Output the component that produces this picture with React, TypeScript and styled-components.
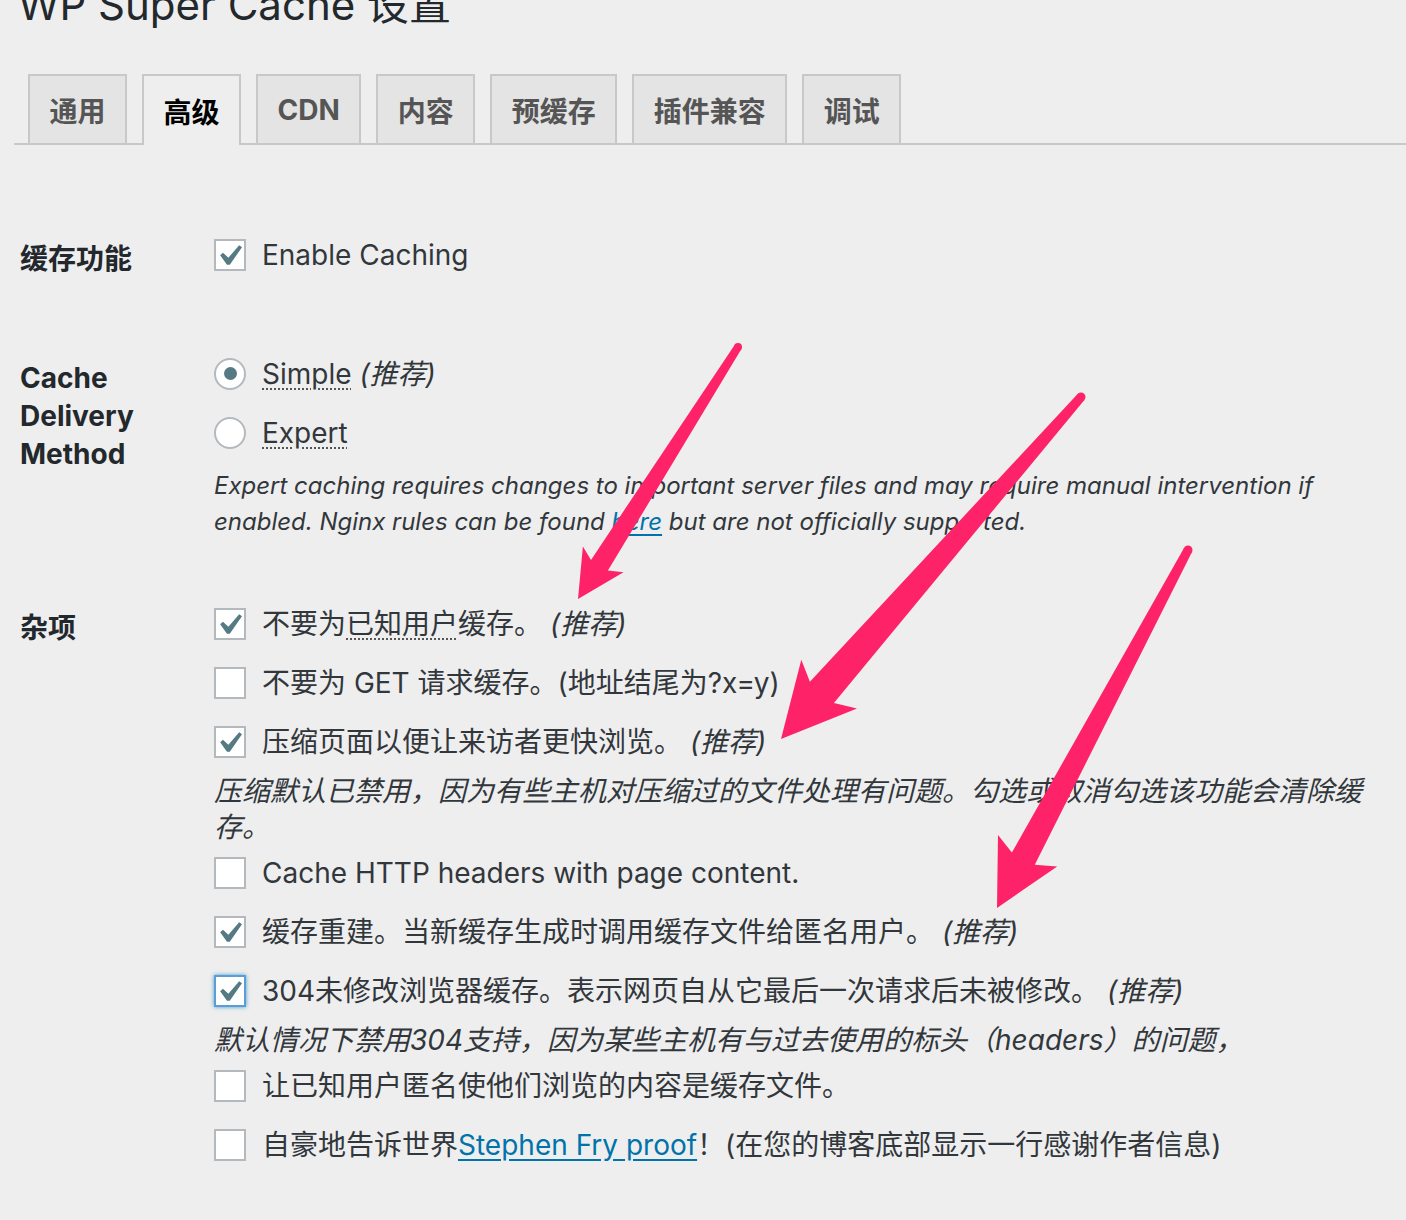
import React from 'react'
import styled, { createGlobalStyle, css } from 'styled-components'

const GlobalStyle = createGlobalStyle`
	body {
		margin: 0;
		background: #eeeeee;
		font-family: Inter, "Noto Sans", "Noto Sans CJK SC", sans-serif;
		color: #32373c;
	}
`

const Page = styled.div`
	position: relative;
	width: 1406px;
	height: 1220px;
	overflow: hidden;
	padding-left: 14px;
	box-sizing: border-box;
`

const Title = styled.h1`
	margin: -16px 0 0 4px;
	height: 42px;
	font-size: 42px;
	line-height: 42px;
	font-weight: 400;
	color: #23282d;
`

const Tabs = styled.nav`
	display: flex;
	gap: 15px;
	margin-top: 48px;
	padding-left: 14px;
	border-bottom: 2px solid #c8c8c8;
`

const Tab = styled.a<{ $active?: boolean }>`
	display: flex;
	align-items: center;
	height: 67px;
	padding: 0 19.5px;
	margin-bottom: -2px;
	border: 2px solid #c8c8c8;
	border-bottom: none;
	background: #e4e4e4;
	color: #555;
	font-size: 28px;
	font-weight: 700;
	text-decoration: none;
	${p => p.$active && css`
		background: #eeeeee;
		color: #000;
		height: 69px;
	`}
`

const Form = styled.div`
	margin-top: 50px;
`

const Row = styled.div<{ $after?: number }>`
	display: grid;
	grid-template-columns: 200px 1160px;
	padding-top: 30px;
	padding-bottom: ${p => p.$after ?? 24}px;
`

const Label = styled.div`
	padding: 15px 0 0 6px;
	font-size: 28px;
	line-height: 38px;
	font-weight: 700;
	color: #23282d;
`

const Field = styled.div`
	display: flex;
	flex-direction: column;
`

const Item = styled.label`
	display: flex;
	align-items: center;
	gap: 16px;
	min-height: 59px;
	font-size: 28px;
	line-height: 40px;
	color: #32373c;
	white-space: nowrap;
`

const Box = styled.span<{ $focus?: boolean }>`
	flex: none;
	width: 28px;
	height: 28px;
	border: 2px solid #b4b9be;
	background: #fff;
	display: flex;
	${p => p.$focus && css`
		border-color: #5b9dd9;
		box-shadow: 0 0 4px rgba(30, 140, 190, 0.8);
	`}
`

const Radio = styled.span<{ $on?: boolean }>`
	flex: none;
	width: 28px;
	height: 28px;
	border: 2px solid #b4b9be;
	border-radius: 50%;
	background: #fff;
	display: flex;
	align-items: center;
	justify-content: center;
	&::before {
		content: '';
		width: 13px;
		height: 13px;
		border-radius: 50%;
		background: ${p => (p.$on ? '#557a83' : 'transparent')};
	}
`

const Dotted = styled.span`
	text-decoration: underline dotted #555;
	text-underline-offset: 5px;
	text-decoration-thickness: 2px;
`

const Rec = styled.em`
	font-style: italic;
`

const Desc = styled.p`
	margin: 6px 0 0;
	font-size: 24px;
	line-height: 36px;
	font-style: italic;
	color: #32373c;
`

const Note = styled.p`
	margin: 2px 0 -2px;
	font-size: 28px;
	line-height: 36px;
	font-style: italic;
	color: #32373c;
`

const Link = styled.a`
	color: #0073aa;
	text-decoration: underline;
	text-underline-offset: 4px;
`

const ArrowLayer = styled.svg`
	position: absolute;
	left: 0;
	top: 0;
	pointer-events: none;
`

const Check = () => (
	<svg width="28" height="28" viewBox="3.8 2.86 13.33 13.33">
		<path fill="#557a83" d="M14.83 4.89l1.34.94-5.81 8.38H9.02L5.78 9.67l1.34-1.25 2.57 2.4z" />
	</svg>
)

const CheckItem: React.FC<{ on?: boolean; focus?: boolean; children: React.ReactNode }> = ({ on, focus, children }) => (
	<Item>
		<Box $focus={focus}>{on && <Check />}</Box>
		<span>{children}</span>
	</Item>
)

type Arrow = {
	tail: [number, number]
	tip: [number, number]
	tailHalf: number
	neck: number
	neckHalf: number
	barb: number
	barbHalf: number
}

const arrows: Arrow[] = [
	{ tail: [738, 347], tip: [578, 599], tailHalf: 4, neck: 40, neckHalf: 10, barb: 47, barbHalf: 24 },
	{ tail: [1081, 397], tip: [781, 739], tailHalf: 4.5, neck: 62, neckHalf: 16, barb: 73, barbHalf: 37 },
	{ tail: [1188, 550], tip: [997, 908], tailHalf: 4.5, neck: 56, neckHalf: 13, barb: 65, barbHalf: 33.5 },
]

const arrowPath = (a: Arrow) => {
	const dx = a.tail[0] - a.tip[0]
	const dy = a.tail[1] - a.tip[1]
	const len = Math.hypot(dx, dy)
	const ux = dx / len
	const uy = dy / len
	const nx = -uy
	const ny = ux
	const p = (along: number, perp: number) =>
		`${(a.tip[0] + ux * along + nx * perp).toFixed(1)} ${(a.tip[1] + uy * along + ny * perp).toFixed(1)}`
	return [
		`M${p(len, a.tailHalf)}`,
		`L${p(a.neck, a.neckHalf)}`,
		`L${p(a.barb, a.barbHalf)}`,
		`L${p(0, 0)}`,
		`L${p(a.barb, -a.barbHalf)}`,
		`L${p(a.neck, -a.neckHalf)}`,
		`L${p(len, -a.tailHalf)}`,
		'Z',
	].join(' ')
}

export default function App() {
	return (
		<Page>
			<GlobalStyle />
			<Title>WP Super Cache 设置</Title>
			<Tabs>
				<Tab>通用</Tab>
				<Tab $active>高级</Tab>
				<Tab>CDN</Tab>
				<Tab>内容</Tab>
				<Tab>预缓存</Tab>
				<Tab>插件兼容</Tab>
				<Tab>调试</Tab>
			</Tabs>
			<Form>
				<Row $after={30}>
					<Label>缓存功能</Label>
					<Field>
						<CheckItem on>Enable Caching</CheckItem>
					</Field>
				</Row>
				<Row>
					<Label>Cache Delivery Method</Label>
					<Field>
						<Item>
							<Radio $on />
							<span><Dotted>Simple</Dotted> <Rec>(推荐)</Rec></span>
						</Item>
						<Item>
							<Radio />
							<span><Dotted>Expert</Dotted></span>
						</Item>
						<Desc>
							Expert caching requires changes to important server files and may require manual intervention if
							enabled. Nginx rules can be found <Link>here</Link> but are not officially supported.
						</Desc>
					</Field>
				</Row>
				<Row>
					<Label>杂项</Label>
					<Field>
						<CheckItem on>不要为<Dotted>已知用户</Dotted>缓存。 <Rec>(推荐)</Rec></CheckItem>
						<CheckItem>不要为 GET 请求缓存。(地址结尾为?x=y)</CheckItem>
						<CheckItem on>压缩页面以便让来访者更快浏览。 <Rec>(推荐)</Rec></CheckItem>
						<Note>压缩默认已禁用，因为有些主机对压缩过的文件处理有问题。勾选或取消勾选该功能会清除缓存。</Note>
						<CheckItem>Cache HTTP headers with page content.</CheckItem>
						<CheckItem on>缓存重建。当新缓存生成时调用缓存文件给匿名用户。 <Rec>(推荐)</Rec></CheckItem>
						<CheckItem on focus>304未修改浏览器缓存。表示网页自从它最后一次请求后未被修改。 <Rec>(推荐)</Rec></CheckItem>
						<Note>默认情况下禁用304支持，因为某些主机有与过去使用的标头（headers）的问题，</Note>
						<CheckItem>让已知用户匿名使他们浏览的内容是缓存文件。</CheckItem>
						<CheckItem>自豪地告诉世界<Link>Stephen Fry proof</Link>！(在您的博客底部显示一行感谢作者信息)</CheckItem>
					</Field>
				</Row>
			</Form>
			<ArrowLayer width="1406" height="1220" viewBox="0 0 1406 1220">
				{arrows.map((a, i) => (
					<g key={i} fill="#fe2369">
						<path d={arrowPath(a)} />
						<circle cx={a.tail[0]} cy={a.tail[1]} r={a.tailHalf} />
					</g>
				))}
			</ArrowLayer>
		</Page>
	)
}
